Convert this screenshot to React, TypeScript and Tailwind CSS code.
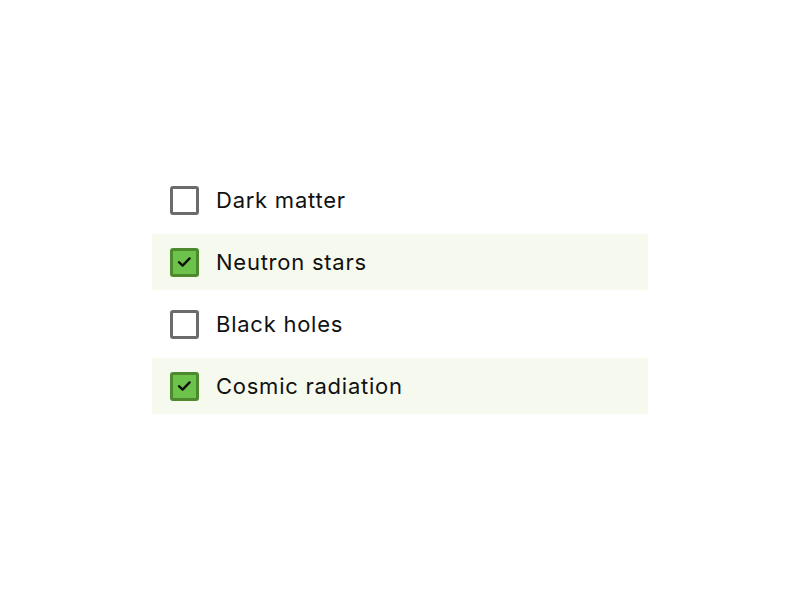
import { useState } from 'react';

const items = [
  { id: 'dark-matter', label: 'Dark matter', checked: false },
  { id: 'neutron-stars', label: 'Neutron stars', checked: true },
  { id: 'black-holes', label: 'Black holes', checked: false },
  { id: 'cosmic-radiation', label: 'Cosmic radiation', checked: true },
];

export default function App() {
  const [state, setState] = useState(items);

  const toggle = (id: string) =>
    setState((s) => s.map((it) => (it.id === id ? { ...it, checked: !it.checked } : it)));

  return (
    <div className="min-h-[600px] w-[800px] bg-white flex items-center justify-center pb-[14px] font-['Inter',sans-serif]">
      <ul className="w-[496px] flex flex-col gap-[6px]">
        {state.map((it) => (
          <li key={it.id}>
            <label
              className={`flex items-center h-[56px] pl-[18px] gap-[17px] cursor-pointer ${
                it.checked ? 'bg-[#f6faee]' : 'bg-white'
              }`}
            >
              <button
                type="button"
                onClick={() => toggle(it.id)}
                className={`w-[29px] h-[29px] rounded-[3px] border-[3px] flex items-center justify-center ${
                  it.checked ? 'bg-[#6cc24a] border-[#4d8a2e]' : 'bg-white border-[#6b6b6b]'
                }`}
              >
                {it.checked && (
                  <svg width="15" height="12" viewBox="0 0 15 12" fill="none">
                    <path
                      d="M2 6.2 L5.6 9.6 L12.6 2.4"
                      stroke="#111"
                      strokeWidth="2.4"
                      strokeLinecap="round"
                      strokeLinejoin="round"
                    />
                  </svg>
                )}
              </button>
              <span className="text-[22px] text-[#111111] tracking-[0.75px]">{it.label}</span>
            </label>
          </li>
        ))}
      </ul>
    </div>
  );
}
